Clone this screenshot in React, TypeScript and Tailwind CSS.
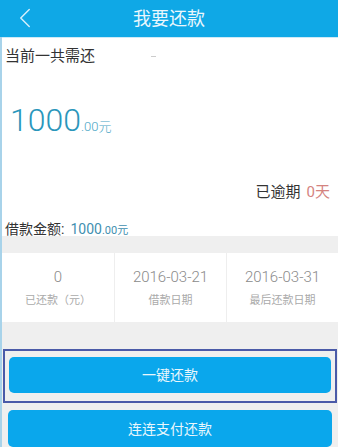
import { ChevronLeft } from 'lucide-react'

const stats = [
  { value: '0', label: '已还款（元）' },
  { value: '2016-03-21', label: '借款日期' },
  { value: '2016-03-31', label: '最后还款日期' },
]

export default function App() {
  return (
    <div
      className="w-[338px] h-[447px] overflow-hidden bg-[#efefef]"
      style={{ fontFamily: 'Roboto, "Noto Sans CJK SC", sans-serif' }}
    >
      {/* header */}
      <div className="relative h-[37px] bg-[#0fa8e6] flex items-center justify-center">
        <ChevronLeft className="absolute left-[8px] top-[1px] w-[34px] h-[34px] text-[#d6effb]" strokeWidth={1} />
        <span className="text-[18px] text-[#eaf7fd] leading-none">我要还款</span>
      </div>

      <div className="border-l-2 border-[#a8d3ea] h-[410px] flex flex-col">
        {/* summary */}
        <div className="bg-white border-t border-[#cdeaf7] h-[199px] flex flex-col">
          <div className="flex items-center h-[36px] pl-[3px]">
            <span className="text-[15px] text-[#333] leading-none">当前一共需还</span>
            <span className="ml-[56px] w-[5px] h-[1px] bg-[#ccc]" />
          </div>
          <div className="flex items-baseline pl-[8px] mt-[30px]">
            <span className="text-[32px] font-light text-[#2a96bb] leading-none">1000</span>
            <span className="text-[13px] font-light text-[#4aa6c6] leading-none">.00元</span>
          </div>
          <div className="flex justify-end items-center pr-[8px] mt-[49px]">
            <span className="text-[15px] text-[#333] leading-none">已逾期</span>
            <span className="text-[15px] text-[#d4837f] leading-none ml-[6px]">0天</span>
          </div>
          <div className="flex items-baseline pl-[3px] mt-[22px]">
            <span className="text-[14px] text-[#333] leading-none">借款金额:</span>
            <span className="text-[14px] text-[#3f8fb0] leading-none ml-[6px]">1000</span>
            <span className="text-[11px] text-[#3f8fb0] leading-none">.00元</span>
          </div>
        </div>

        {/* stats */}
        <div className="mt-[17px] bg-white h-[69px] grid grid-cols-3">
          {stats.map((s, i) => (
            <div
              key={s.label}
              className={`flex flex-col items-center justify-center ${i > 0 ? 'border-l border-[#eeeeee]' : ''}`}
            >
              <span className="text-[15px] font-light text-[#8a8a8a] leading-none">{s.value}</span>
              <span className="text-[11px] text-[#aaaaaa] leading-none mt-[10px]">{s.label}</span>
            </div>
          ))}
        </div>

        {/* buttons */}
        <div className="mt-[27px] mx-[1px] border-2 border-[#4a5aa8] h-[54px] px-[4px] pt-[6px]">
          <div className="h-[36px] rounded-[5px] bg-[#0aa7ec] flex items-center justify-center">
            <span className="text-[14px] text-[#eaf7fd] leading-none">一键还款</span>
          </div>
        </div>
        <div className="mt-[7px] mx-[6px] h-[37px] rounded-[5px] bg-[#0aa7ec] flex items-center justify-center">
          <span className="text-[14px] text-[#eaf7fd] leading-none">连连支付还款</span>
        </div>
      </div>
    </div>
  )
}
